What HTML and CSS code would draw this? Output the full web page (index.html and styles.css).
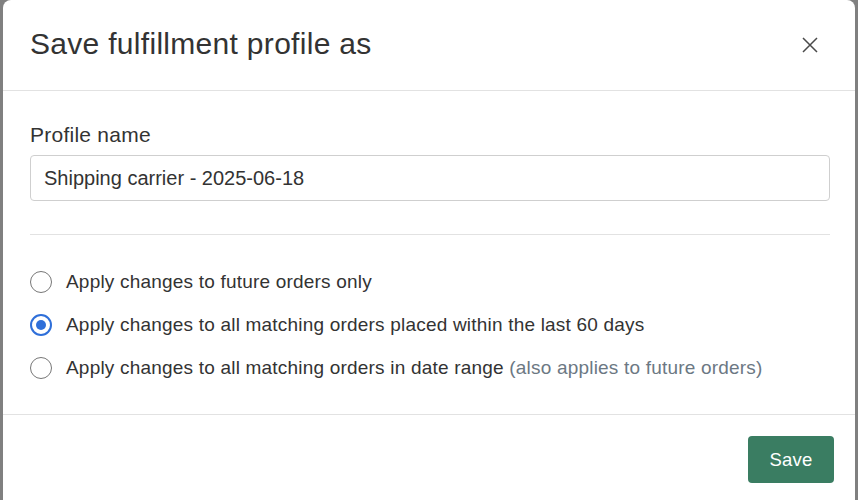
FILE: index.html
```html
<!DOCTYPE html>
<html>
<head>
<meta charset="utf-8">
<link rel="stylesheet" href="styles.css">
</head>
<body>
<div class="modal">
  <div class="modal-header">
    <h1 class="title">Save fulfillment profile as</h1>
    <button class="close" aria-label="Close">
      <svg width="16" height="16" viewBox="0 0 16 16"><path d="M1 1 L15 15 M15 1 L1 15" stroke="#4a4a4a" stroke-width="1.5" fill="none"/></svg>
    </button>
  </div>
  <div class="modal-body">
    <label class="label">Profile name</label>
    <div class="input">Shipping carrier - 2025-06-18</div>
    <hr class="sep">
    <div class="options">
      <div class="option"><span class="radio"></span><span>Apply changes to future orders only</span></div>
      <div class="option"><span class="radio checked"></span><span>Apply changes to all matching orders placed within the last 60 days</span></div>
      <div class="option"><span class="radio"></span><span>Apply changes to all matching orders in date range <span class="muted">(also applies to future orders)</span></span></div>
    </div>
  </div>
  <div class="modal-footer">
    <button class="save">Save</button>
  </div>
</div>
</body>
</html>
```
FILE: styles.css
```css
html, body {
  margin: 0;
  padding: 0;
  height: 100%;
  overflow: hidden;
}
body {
  background: #808080;
  font-family: "Liberation Sans", Arial, sans-serif;
  color: #333;
}
.modal {
  margin-left: 3px;
  width: 852px;
  height: 540px;
  background: #fff;
  border-radius: 8px 8px 0 0;
}
.modal-header {
  height: 91px;
  box-sizing: border-box;
  border-bottom: 1px solid #e2e2e2;
  display: flex;
  align-items: center;
  justify-content: space-between;
  padding: 0 37px 0 27px;
}
.title {
  margin: 0;
  font-size: 30px;
  letter-spacing: 0.3px;
  font-weight: normal;
  color: #333;
  padding-bottom: 2px;
}
.close {
  border: 0;
  background: none;
  padding: 0;
  width: 16px;
  height: 16px;
  display: flex;
}
.modal-body {
  padding: 32px 25px 35px 27px;
}
.label {
  display: block;
  font-size: 21px;
  letter-spacing: 0.25px;
  line-height: 24px;
  margin-bottom: 8px;
}
.input {
  height: 46px;
  box-sizing: border-box;
  border: 1px solid #cfcfcf;
  border-radius: 4px;
  padding: 0 13px;
  display: flex;
  align-items: center;
  font-size: 20px;
}
.sep {
  border: 0;
  border-top: 1px solid #e2e2e2;
  margin: 33px 0 0;
}
.options {
  display: flex;
  flex-direction: column;
  gap: 21px;
  padding-top: 36px;
}
.option {
  display: flex;
  align-items: center;
  gap: 14px;
  font-size: 19px;
  letter-spacing: 0.2px;
  line-height: 22px;
}
.radio {
  width: 22px;
  height: 22px;
  box-sizing: border-box;
  border: 1.5px solid #777;
  border-radius: 50%;
  flex: none;
  position: relative;
}
.radio.checked {
  border: 2px solid #2f6fd9;
}
.radio.checked::after {
  content: "";
  position: absolute;
  left: 4px;
  top: 4px;
  width: 10px;
  height: 10px;
  border-radius: 50%;
  background: #2f6fd9;
}
.muted {
  color: #6c7883;
}
.modal-footer {
  border-top: 1px solid #e2e2e2;
  padding: 21px 21px 0 0;
  display: flex;
  justify-content: flex-end;
}
.save {
  width: 86px;
  height: 47px;
  border: 0;
  border-radius: 4px;
  background: #3a7d62;
  color: #fff;
  font-family: "Liberation Sans", Arial, sans-serif;
  font-size: 18.5px;
  letter-spacing: 0.2px;
}
```
